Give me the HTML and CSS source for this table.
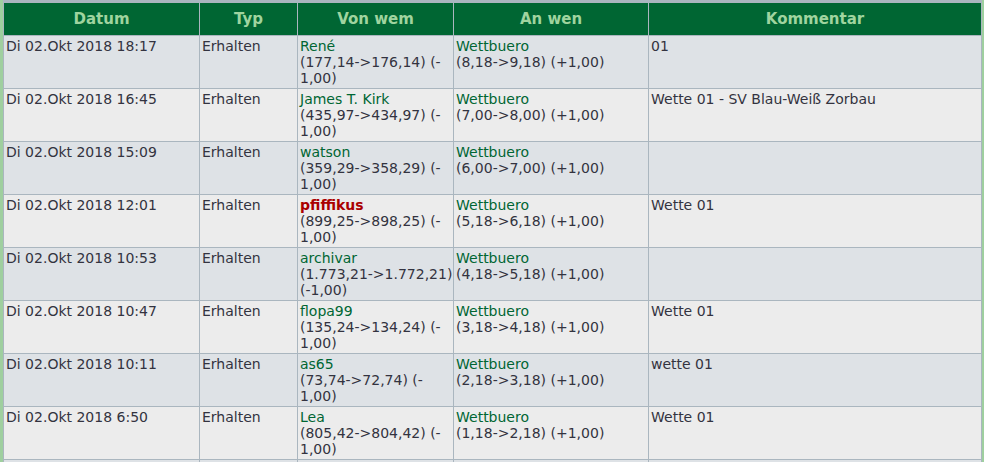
FILE: index.html
```html
<!DOCTYPE html>
<html lang="de">
<head>
<meta charset="utf-8">
<title>Transaktionen</title>
<link rel="stylesheet" href="styles.css">
</head>
<body>
<div class="frame">
<table class="tx">
<colgroup>
<col class="c-datum"><col class="c-typ"><col class="c-von"><col class="c-an"><col class="c-komm">
</colgroup>
<thead>
<tr><th>Datum</th><th>Typ</th><th>Von wem</th><th>An wen</th><th>Kommentar</th></tr>
</thead>
<tbody>
<tr class="odd"><td>Di 02.Okt 2018 18:17</td><td>Erhalten</td><td><a class="user">René</a><br><span class="nw">(177,14-&gt;176,14)</span> (-<wbr>1,00)</td><td><a class="user">Wettbuero</a><br><span class="nw">(8,18-&gt;9,18)</span> (+1,00)</td><td>01</td></tr>
<tr class="even"><td>Di 02.Okt 2018 16:45</td><td>Erhalten</td><td><a class="user">James T. Kirk</a><br><span class="nw">(435,97-&gt;434,97)</span> (-<wbr>1,00)</td><td><a class="user">Wettbuero</a><br><span class="nw">(7,00-&gt;8,00)</span> (+1,00)</td><td>Wette 01 - SV Blau-Weiß Zorbau</td></tr>
<tr class="odd"><td>Di 02.Okt 2018 15:09</td><td>Erhalten</td><td><a class="user">watson</a><br><span class="nw">(359,29-&gt;358,29)</span> (-<wbr>1,00)</td><td><a class="user">Wettbuero</a><br><span class="nw">(6,00-&gt;7,00)</span> (+1,00)</td><td></td></tr>
<tr class="even"><td>Di 02.Okt 2018 12:01</td><td>Erhalten</td><td><a class="user admin">pfiffikus</a><br><span class="nw">(899,25-&gt;898,25)</span> (-<wbr>1,00)</td><td><a class="user">Wettbuero</a><br><span class="nw">(5,18-&gt;6,18)</span> (+1,00)</td><td>Wette 01</td></tr>
<tr class="odd"><td>Di 02.Okt 2018 10:53</td><td>Erhalten</td><td><a class="user">archivar</a><br><span class="nw">(1.773,21-&gt;1.772,21)</span> (-<wbr>1,00)</td><td><a class="user">Wettbuero</a><br><span class="nw">(4,18-&gt;5,18)</span> (+1,00)</td><td></td></tr>
<tr class="even"><td>Di 02.Okt 2018 10:47</td><td>Erhalten</td><td><a class="user">flopa99</a><br><span class="nw">(135,24-&gt;134,24)</span> (-<wbr>1,00)</td><td><a class="user">Wettbuero</a><br><span class="nw">(3,18-&gt;4,18)</span> (+1,00)</td><td>Wette 01</td></tr>
<tr class="odd"><td>Di 02.Okt 2018 10:11</td><td>Erhalten</td><td><a class="user">as65</a><br><span class="nw">(73,74-&gt;72,74)</span> (-<wbr>1,00)</td><td><a class="user">Wettbuero</a><br><span class="nw">(2,18-&gt;3,18)</span> (+1,00)</td><td>wette 01</td></tr>
<tr class="even"><td>Di 02.Okt 2018 6:50</td><td>Erhalten</td><td><a class="user">Lea</a><br><span class="nw">(805,42-&gt;804,42)</span> (-<wbr>1,00)</td><td><a class="user">Wettbuero</a><br><span class="nw">(1,18-&gt;2,18)</span> (+1,00)</td><td>Wette 01</td></tr>
<tr class="odd"><td>Di 02.Okt 2018 6:12</td><td>Erhalten</td><td><a class="user">Gast</a><br><span class="nw">(10,00-&gt;9,00)</span> (-<wbr>1,00)</td><td><a class="user">Wettbuero</a><br><span class="nw">(0,18-&gt;1,18)</span> (+1,00)</td><td>Wette 01</td></tr>
</tbody>
</table>
</div>
</body>
</html>
```
FILE: styles.css
```css
html, body {
  margin: 0;
  padding: 0;
  background: #9fcf9f;
  overflow: hidden;
}
body {
  font-family: "DejaVu Sans", Verdana, sans-serif;
  font-size: 14px;
  line-height: 16px;
  color: #333340;
}
.frame {
  margin: 0 2px 0 3px;
  border-top: 2px solid #aab6bf;
}
.tx {
  width: 979px;
  table-layout: fixed;
  border-collapse: collapse;
  border: 1px solid #aab6bf;
}
.c-datum { width: 196px; }
.c-typ { width: 98px; }
.c-von { width: 156px; }
.c-an { width: 195px; }
.c-komm { width: 333px; }
.tx th {
  background: #006633;
  color: #9fd49f;
  font-size: 15px;
  font-weight: bold;
  text-align: center;
  padding: 8px 2px;
  border: 1px solid #aab6bf;
  border-top: none;
}
.tx td {
  vertical-align: top;
  text-align: left;
  padding: 2px 2px;
  border: 1px solid #aab6bf;
  height: 48px;
}
.tx tr.odd td { background: #dee2e6; }
.tx tr.even td { background: #ececec; }
.nw { white-space: nowrap; }
.user {
  color: #006633;
  text-decoration: none;
}
.user.admin {
  color: #aa0000;
  font-weight: bold;
}
```
